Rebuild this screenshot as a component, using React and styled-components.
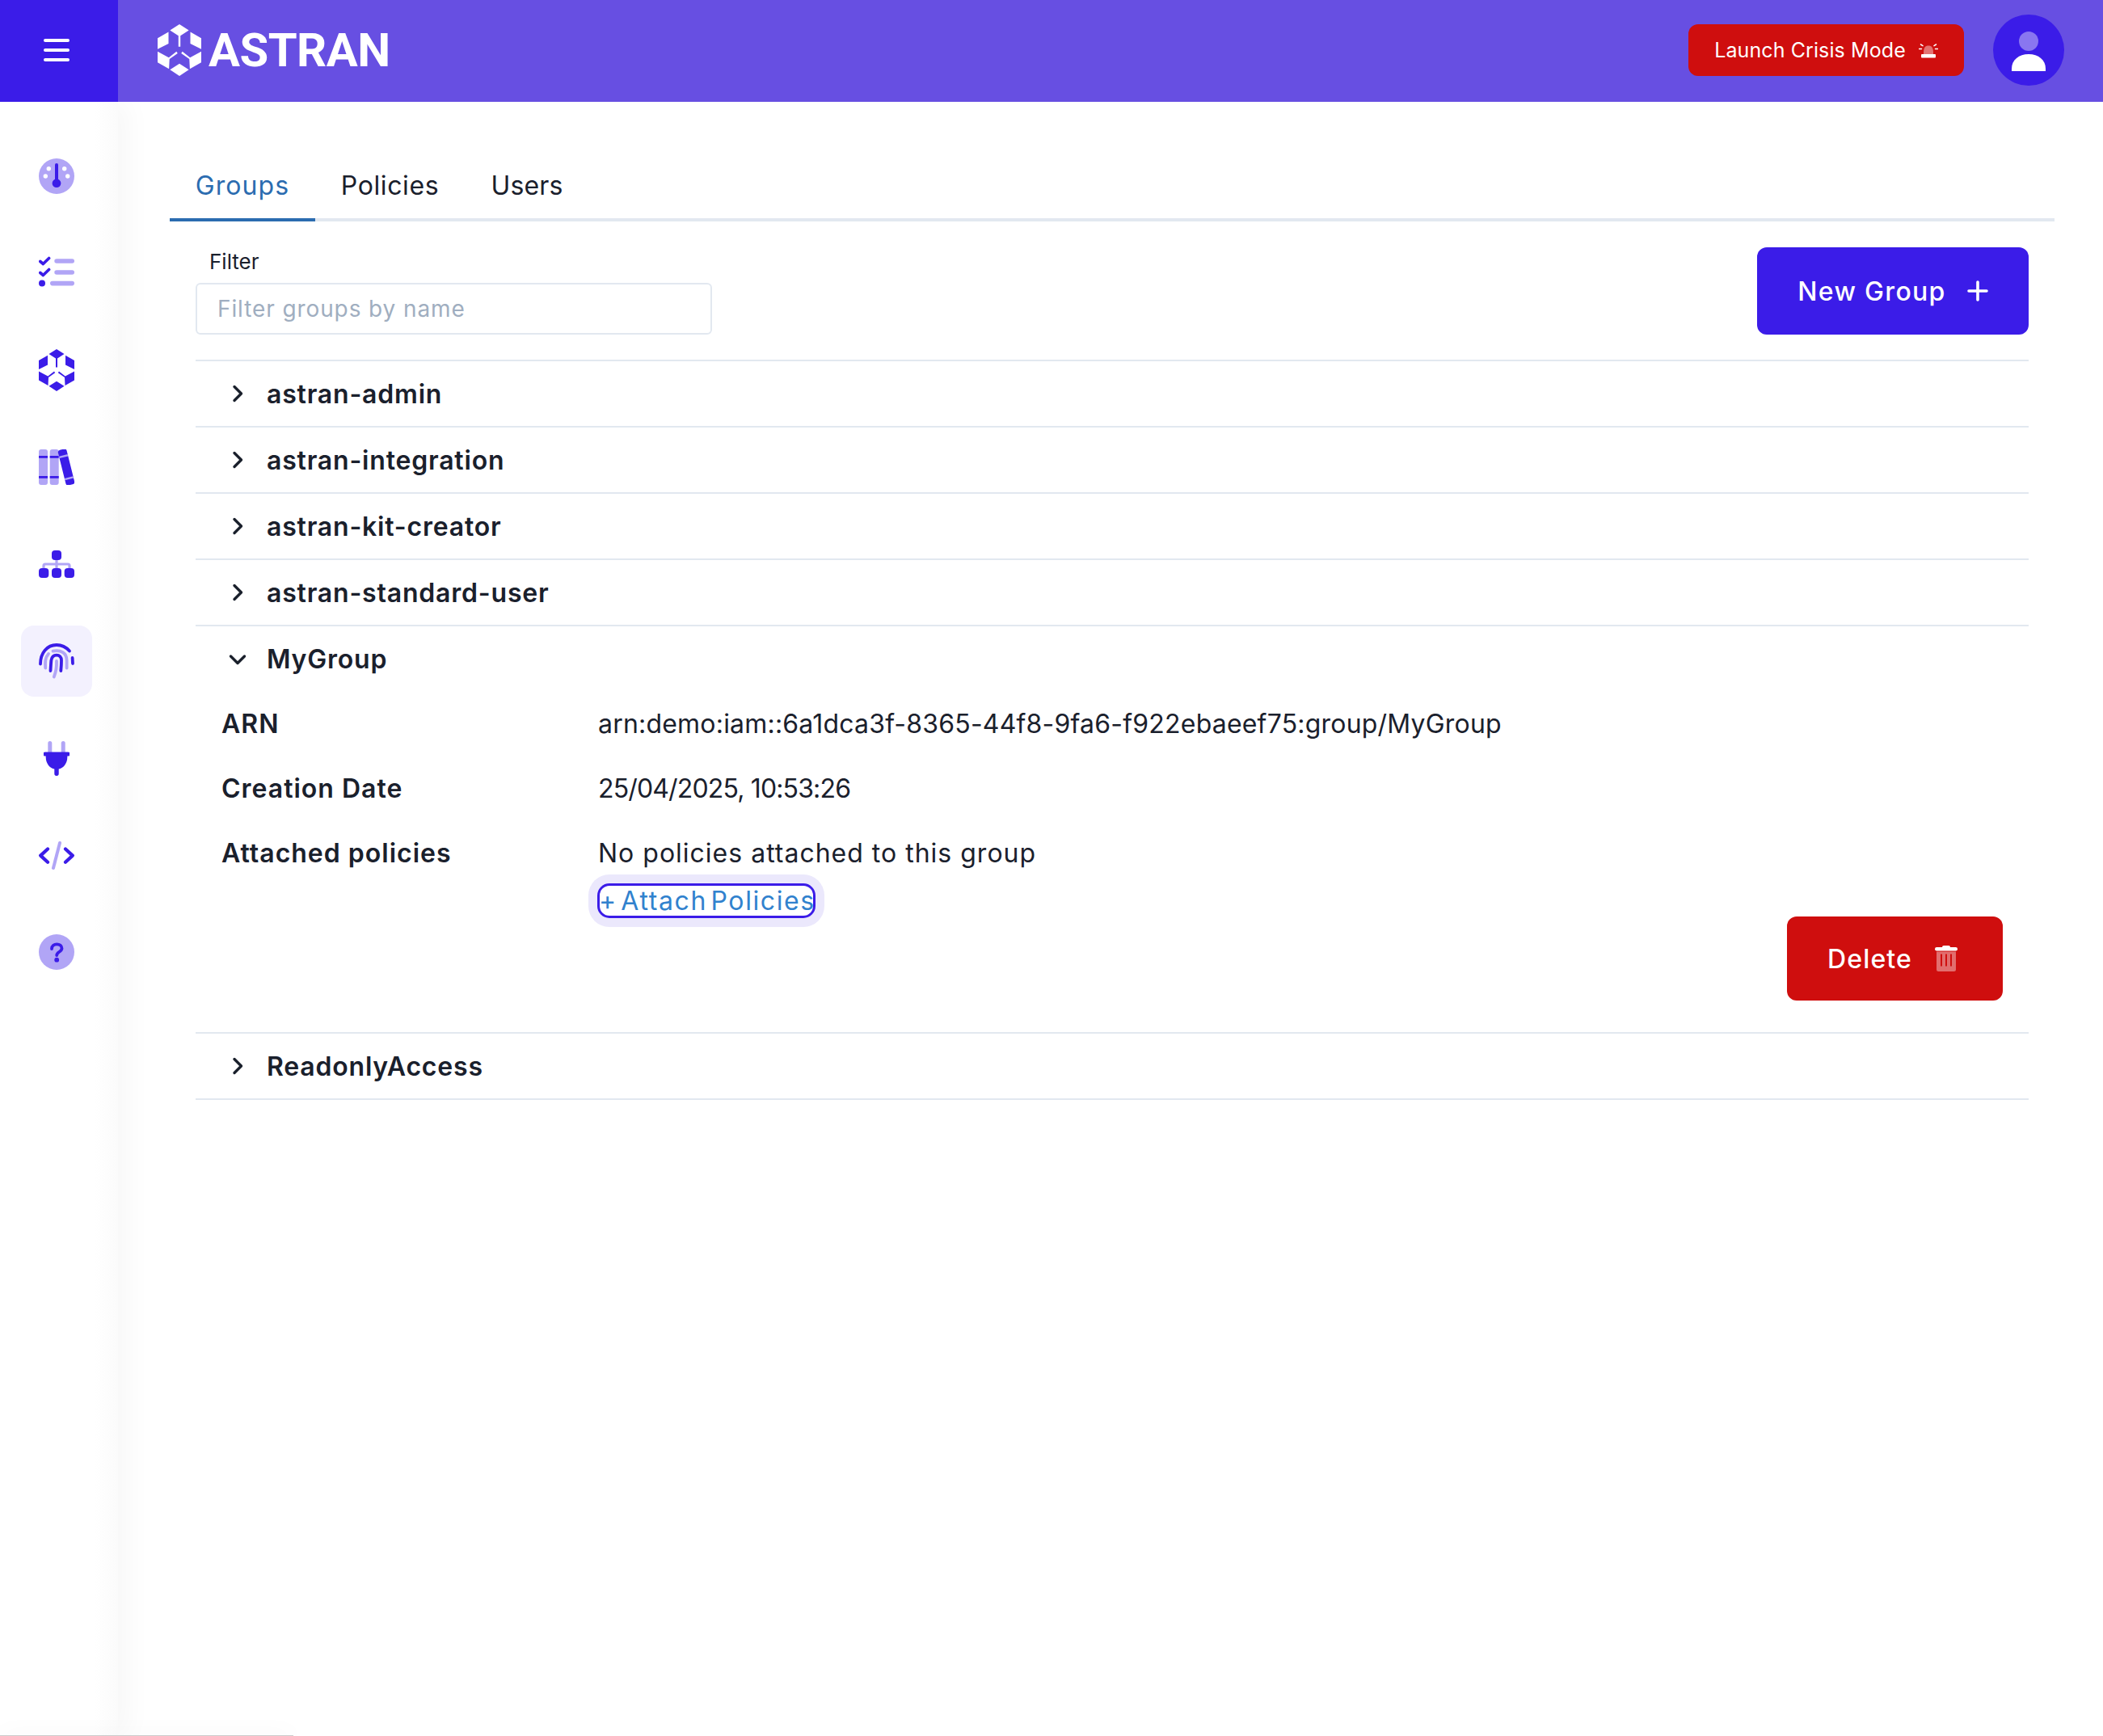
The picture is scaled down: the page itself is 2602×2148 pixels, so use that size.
import styled, { createGlobalStyle } from "styled-components";

const primary = "#3b1ce8";
const light = "#b1a5f6";
const red = "#cf0e0e";
const ink = "#1a202c";
const line = "#e2e8f0";

const GlobalStyle = createGlobalStyle`
  html, body {
    margin: 0;
    padding: 0;
    background: #fff;
    width: 2602px;
    height: 2148px;
    overflow: hidden;
    font-family: Inter, "Noto Sans", sans-serif;
    color: ${ink};
  }
  * { box-sizing: border-box; }
`;

const HexMark = ({ width = 44, height = 52 }) => (
  <svg width={width} height={height} viewBox="0 0 44 52" fill="currentColor">
    <path d="M22 0l9.5 6L23 11.6V22.6H21V11.6L12.5 6z" />
    <path d="M22 39.7l9.5 6.1L22 52l-9.5-6.2z" />
    <path d="M0 14L11 7.7V19.5L0 25z" />
    <path d="M44 14L33 7.7V19.5L44 25z" />
    <path d="M0 27.5L11.3 33.5L19 27.5L20.2 29.2L12 35L11.5 45L0 38.5z" />
    <path d="M44 27.5L32.7 33.5L25 27.5L23.8 29.2L32 35L32.5 45L44 38.5z" />
  </svg>
);

const DashIcon = () => (
  <svg width="44" height="44" viewBox="0 0 44 44">
    <circle cx="22" cy="22" r="22" fill={light} />
    <g fill="#fff">
      <circle cx="12.3" cy="12.7" r="2.7" />
      <circle cx="31.7" cy="12.7" r="2.7" />
      <circle cx="8.3" cy="22" r="2.7" />
      <circle cx="35.7" cy="22" r="2.7" />
    </g>
    <rect x="20" y="6" width="4" height="24" rx="2" fill={primary} />
    <circle cx="22" cy="30.7" r="5.4" fill={primary} />
  </svg>
);

const TasksIcon = () => (
  <svg width="44" height="44" viewBox="0 -1.5 44 44">
    <g fill={light}>
      <rect x="19.3" y="2.7" width="24.7" height="5.6" rx="2.8" />
      <rect x="19.3" y="16.7" width="24.7" height="5.6" rx="2.8" />
      <rect x="14" y="30.3" width="30" height="5.6" rx="2.8" />
    </g>
    <g fill="none" stroke={primary} strokeWidth="3.6" strokeLinecap="round" strokeLinejoin="round">
      <path d="M1.8 6L5.4 9L12.6 2" />
      <path d="M1.8 20L5.4 23L12.6 16" />
    </g>
    <circle cx="4" cy="33" r="4" fill={primary} />
  </svg>
);

const BooksIcon = () => (
  <svg width="44" height="44" viewBox="0 0 44 44">
    <rect x="0" width="11" height="44" rx="3" fill={light} />
    <rect x="13.7" width="11" height="44" rx="3" fill={light} />
    <g fill={primary}>
      <rect x="0" y="8" width="11" height="2.8" />
      <rect x="13.7" y="8" width="11" height="2.8" />
      <rect x="0" y="33" width="11" height="2.8" />
      <rect x="13.7" y="33" width="11" height="2.8" />
    </g>
    <g transform="rotate(-14 34 22)">
      <rect x="28.5" y="-0.5" width="11" height="45" rx="3" fill={primary} />
      <rect x="28.5" y="7" width="11" height="2.4" fill={light} />
      <rect x="28.5" y="35" width="11" height="2.4" fill={light} />
    </g>
  </svg>
);

const OrgIcon = () => (
  <svg width="44" height="34" viewBox="0 0 44 34">
    <path d="M6 24V19a2 2 0 0 1 2-2H36a2 2 0 0 1 2 2V24M22 11V24" fill="none" stroke={light} strokeWidth="3.2" />
    <g fill={primary}>
      <rect x="16" width="12" height="12" rx="4" />
      <rect y="22" width="12.3" height="12" rx="4" />
      <rect x="16" y="22" width="12" height="12" rx="4" />
      <rect x="31.7" y="22" width="12.3" height="12" rx="4" />
    </g>
  </svg>
);

const FingerIcon = () => (
  <svg width="44" height="44" viewBox="0 0 44 44" fill="none" strokeWidth="3.8" strokeLinecap="round">
    <g stroke={primary}>
      <path d="M2 25.5C2 12 10 2 22 2C29 2 34 5 38 9.5" />
      <path d="M41.6 18L42 25" />
      <path d="M14.5 34C14.8 29 15 25 15.4 21C16 17 18.6 14.6 22 14.6C25.6 14.6 28 17 28 21C28 25 27.8 29 27.3 34" />
    </g>
    <g stroke={light}>
      <path d="M8.2 30.5C7.8 24 7.5 18 12 13" />
      <path d="M17.5 9.6C27 7.5 34.6 12 34.6 21V30.5" />
      <path d="M22 22C22.4 30 21 36 18.8 41.5" />
    </g>
  </svg>
);

const PlugIcon = () => (
  <svg width="32" height="43" viewBox="0 0 32 43">
    <rect x="5.3" width="5" height="16" rx="2.5" fill={light} />
    <rect x="21.7" width="5" height="16" rx="2.5" fill={light} />
    <path
      d="M2 13.4H30a2 2 0 0 1 0 5.2H29.3V20C29.3 28 24 33.6 18.7 34.6V40.3a2.7 2.7 0 0 1-5.4 0V34.6C8 33.6 2.7 28 2.7 20V18.6H2a2 2 0 0 1 0-5.2z"
      fill={primary}
    />
  </svg>
);

const CodeIcon = () => (
  <svg width="44" height="35" viewBox="0 0 44 35" fill="none" strokeLinecap="round" strokeLinejoin="round">
    <path d="M11 9.5L2.2 17.6L11 25.8M33 9.5L41.8 17.6L33 25.8" stroke={primary} strokeWidth="4.2" />
    <path d="M26 2L18 33" stroke={light} strokeWidth="4" />
  </svg>
);

const HelpIcon = () => (
  <svg width="44" height="44" viewBox="0 0 44 44">
    <circle cx="22" cy="22" r="22" fill={light} />
    <path d="M16 18C16 10.5 28.5 10.5 28.5 17.5C28.5 22 22.2 21.5 22.2 26" fill="none" stroke={primary} strokeWidth="3.8" strokeLinecap="round" />
    <circle cx="22.2" cy="31.7" r="2.9" fill={primary} />
  </svg>
);

const SirenIcon = () => (
  <svg width="24" height="20" viewBox="0 0 24 20">
    <path d="M6 13C6 7 8 4.5 12 4.5C16 4.5 18 7 18 13V15H6z" fill="#fff" fillOpacity="0.42" />
    <rect x="3" y="15" width="18" height="4.4" rx="1" fill="#fff" />
    <path d="M2.5 3L5 4.6M0.5 8.5H3.5M21.5 3L19 4.6M23.5 8.5H20.5" stroke="#fff" strokeWidth="1.5" strokeLinecap="round" />
  </svg>
);

const TrashIcon = () => (
  <svg width="28" height="32" viewBox="0 0 28 32">
    <path d="M2 7.5H26V29.5a2.5 2.5 0 0 1-2.5 2.5H4.5A2.5 2.5 0 0 1 2 29.5z" fill="#fff" fillOpacity="0.4" />
    <rect x="0" y="2" width="28" height="4.4" rx="2.2" fill="#fff" />
    <rect x="9" y="0" width="10" height="4" rx="2" fill="#fff" />
    <g fill={red}>
      <rect x="7" y="10.5" width="2" height="15" />
      <rect x="13" y="10.5" width="2" height="15" />
      <rect x="19" y="10.5" width="2" height="15" />
    </g>
  </svg>
);

const PlusIcon = () => (
  <svg width="26" height="26" viewBox="0 0 26 26">
    <path d="M13 2V24M2 13H24" stroke="#fff" strokeWidth="3.6" strokeLinecap="round" />
  </svg>
);

const Chevron = ({ open }) => (
  <svg width="32" height="32" viewBox="0 0 32 32" fill="none" stroke={ink} strokeWidth="3.4" strokeLinecap="round" strokeLinejoin="round">
    <path d={open ? "M7.5 12L16 20.5L24.5 12" : "M12 7.5L20.5 16L12 24.5"} />
  </svg>
);

const navItems = [
  { icon: <DashIcon /> },
  { icon: <TasksIcon /> },
  { icon: <HexMark /> },
  { icon: <BooksIcon /> },
  { icon: <OrgIcon /> },
  { icon: <FingerIcon />, active: true },
  { icon: <PlugIcon /> },
  { icon: <CodeIcon /> },
  { icon: <HelpIcon /> },
];

const groupsBefore = ["astran-admin", "astran-integration", "astran-kit-creator", "astran-standard-user"];

const App = () => {
  return (
    <Page>
      <GlobalStyle />
      <Header>
        <MenuBlock>
          <MenuBars>
            <span />
            <span />
            <span />
          </MenuBars>
        </MenuBlock>
        <Brand>
          <HexMark width={54} height={64} />
          <BrandName>ASTRAN</BrandName>
        </Brand>
        <HeaderRight>
          <CrisisButton>
            Launch Crisis Mode
            <SirenIcon />
          </CrisisButton>
          <Avatar>
            <svg width="44" height="50" viewBox="0 0 44 50">
              <circle cx="22" cy="12" r="12" fill="#8976f0" />
              <path d="M1 49V46C1 35 10 28 22 28C34 28 43 35 43 46V49z" fill="#fff" />
            </svg>
          </Avatar>
        </HeaderRight>
      </Header>
      <Body>
        <Sidebar>
          {navItems.map((item, i) => (
            <NavTile key={i} $active={item.active}>
              {item.icon}
            </NavTile>
          ))}
        </Sidebar>
        <Main>
          <TabList>
            <Tab $active $width={180} $track={1.1}>Groups</Tab>
            <Tab $width={185} $track={0.6}>Policies</Tab>
            <Tab $width={154} $track={0.1}>Users</Tab>
          </TabList>
          <TabPanel>
            <Toolbar>
              <div>
                <FilterLabel>Filter</FilterLabel>
                <FilterInput placeholder="Filter groups by name" />
              </div>
              <PrimaryButton>
                New Group
                <PlusIcon />
              </PrimaryButton>
            </Toolbar>
            {groupsBefore.map((name) => (
              <GroupRow key={name}>
                <Chevron />
                <GroupName>{name}</GroupName>
              </GroupRow>
            ))}
            <Expanded>
              <GroupRow $open>
                <Chevron open />
                <GroupName>MyGroup</GroupName>
              </GroupRow>
              <DetailRow>
                <DetailLabel>ARN</DetailLabel>
                <DetailValue $track={0.2}>arn:demo:iam::6a1dca3f-8365-44f8-9fa6-f922ebaeef75:group/MyGroup</DetailValue>
              </DetailRow>
              <DetailRow>
                <DetailLabel>Creation Date</DetailLabel>
                <DetailValue $track={-0.85}>25/04/2025, 10:53:26</DetailValue>
              </DetailRow>
              <DetailRow $tall>
                <DetailLabel>Attached policies</DetailLabel>
                <div>
                  <DetailValue $track={1}>No policies attached to this group</DetailValue>
                  <AttachLink>+ Attach Policies</AttachLink>
                </div>
              </DetailRow>
              <DetailFooter>
                <DangerButton>
                  Delete
                  <TrashIcon />
                </DangerButton>
              </DetailFooter>
            </Expanded>
            <GroupRow>
              <Chevron />
              <GroupName>ReadonlyAccess</GroupName>
            </GroupRow>
          </TabPanel>
        </Main>
      </Body>
      <BottomShadow />
    </Page>
  );
};

const Page = styled.div`
  position: relative;
  width: 2602px;
  height: 2148px;
  overflow: hidden;
  display: flex;
  flex-direction: column;
`;

const Header = styled.header`
  flex: 0 0 126px;
  display: flex;
  align-items: center;
  background: #674fe2;
  position: relative;
  z-index: 2;
`;

const MenuBlock = styled.div`
  width: 146px;
  height: 100%;
  padding: 0 6px 2px 0;
  background: ${primary};
  display: flex;
  align-items: center;
  justify-content: center;
`;

const MenuBars = styled.div`
  width: 32px;
  display: flex;
  flex-direction: column;
  gap: 8px;

  span {
    height: 4px;
    border-radius: 2px;
    background: #fff;
  }
`;

const Brand = styled.div`
  margin: 0 0 2px 49px;
  display: flex;
  align-items: center;
  gap: 9px;
  color: #fff;
`;

const BrandName = styled.span`
  font-family: Roboto, sans-serif;
  font-weight: 700;
  font-size: 58px;
  line-height: 64px;
  letter-spacing: -0.5px;
`;

const HeaderRight = styled.div`
  margin-left: auto;
  padding: 0 48px 2px 0;
  display: flex;
  align-items: center;
  gap: 36px;
`;

const CrisisButton = styled.button`
  width: 341px;
  height: 64px;
  border: 0;
  border-radius: 12px;
  background: ${red};
  color: #fff;
  font-family: Inter, sans-serif;
  font-size: 25px;
  letter-spacing: 0.1px;
  display: flex;
  align-items: center;
  justify-content: center;
  gap: 16px;
`;

const Avatar = styled.div`
  width: 88px;
  height: 88px;
  border-radius: 50%;
  background: ${primary};
  display: flex;
  align-items: center;
  justify-content: center;
  padding-top: 4px;
`;

const Body = styled.div`
  flex: 1;
  display: flex;
  min-height: 0;
`;

const Sidebar = styled.nav`
  flex: 0 0 146px;
  padding: 48px 6px 0 0;
  display: flex;
  flex-direction: column;
  align-items: center;
  gap: 32px;
  background: linear-gradient(to right, #fff 80%, #fbfbfb);
  box-shadow: 12px 0 32px rgba(0, 0, 0, 0.035);
`;

const NavTile = styled.div`
  width: 88px;
  height: 88px;
  border-radius: 16px;
  display: flex;
  align-items: center;
  justify-content: center;
  background: ${(p) => (p.$active ? "#f3f1fe" : "transparent")};
  color: ${primary};
`;

const Main = styled.main`
  flex: 1;
  padding: 70px 60px 0 64px;
`;

const TabList = styled.div`
  display: flex;
  border-bottom: 4px solid ${line};
`;

const Tab = styled.div`
  width: ${(p) => p.$width}px;
  height: 78px;
  margin-bottom: -4px;
  text-align: center;
  line-height: 68px;
  font-size: 32px;
  letter-spacing: ${(p) => p.$track}px;
  color: ${(p) => (p.$active ? "#2b6cb0" : ink)};
  border-bottom: 4px solid ${(p) => (p.$active ? "#2b6cb0" : "transparent")};
`;

const TabPanel = styled.div`
  padding: 32px 32px 0 32px;
`;

const Toolbar = styled.div`
  height: 141px;
  display: flex;
  justify-content: space-between;
  align-items: flex-start;
  border-bottom: 2px solid ${line};
`;

const FilterLabel = styled.div`
  height: 36px;
  margin-bottom: 8px;
  padding-left: 17px;
  font-size: 26px;
  line-height: 36px;
`;

const FilterInput = styled.input`
  display: block;
  width: 639px;
  height: 64px;
  padding: 0 25px;
  border: 2px solid ${line};
  border-radius: 6px;
  background: #fff;
  font-family: Inter, sans-serif;
  font-size: 28px;
  letter-spacing: 0.9px;

  &::placeholder {
    color: #a0aec0;
    opacity: 1;
  }
`;

const PrimaryButton = styled.button`
  width: 336px;
  height: 108px;
  border: 0;
  border-radius: 12px;
  background: ${primary};
  color: #fff;
  font-family: Inter, sans-serif;
  font-size: 32px;
  font-weight: 500;
  letter-spacing: 1.3px;
  display: flex;
  align-items: center;
  justify-content: center;
  gap: 26px;
`;

const GroupRow = styled.div`
  height: ${(p) => (p.$open ? "81px" : "82px")};
  padding-left: 36px;
  display: flex;
  align-items: center;
  gap: 20px;
  border-bottom: ${(p) => (p.$open ? "none" : `2px solid ${line}`)};
`;

const GroupName = styled.span`
  font-size: 32px;
  font-weight: 600;
  letter-spacing: 0.8px;
`;

const Expanded = styled.section`
  border-bottom: 2px solid ${line};
`;

const DetailRow = styled.div`
  display: flex;
  align-items: flex-start;
  padding-top: 16px;
  padding-left: 32px;
  height: ${(p) => (p.$tall ? "118px" : "80px")};
`;

const DetailLabel = styled.div`
  width: 466px;
  font-size: 32px;
  line-height: 48px;
  font-weight: 600;
  letter-spacing: 1px;
`;

const DetailValue = styled.div`
  font-size: 32px;
  line-height: 48px;
  letter-spacing: ${(p) => p.$track}px;
`;

const AttachLink = styled.a`
  display: block;
  width: 264px;
  height: 37px;
  margin: 16px 0 0 2px;
  border-radius: 12px;
  box-shadow: 0 0 0 3px ${primary}, 0 0 0 14px #ebe8fc;
  background: #fff;
  font-size: 32px;
  line-height: 37px;
  text-indent: -1px;
  color: #3182ce;
  white-space: nowrap;
  letter-spacing: 1.6px;
  word-spacing: -6px;
`;

const DetailFooter = styled.div`
  display: flex;
  justify-content: flex-end;
  padding: 0 32px 39px 0;
`;

const DangerButton = styled.button`
  width: 267px;
  height: 104px;
  padding: 0 6px 0 0;
  border: 0;
  border-radius: 12px;
  background: ${red};
  color: #fff;
  font-family: Inter, sans-serif;
  font-size: 32px;
  font-weight: 500;
  letter-spacing: 1.15px;
  display: flex;
  align-items: center;
  justify-content: center;
  gap: 28px;
`;

const BottomShadow = styled.div`
  position: absolute;
  left: 0;
  bottom: -2px;
  width: 363px;
  height: 3px;
  background: #ccc;
  box-shadow: 0 0 28px rgba(0, 0, 0, 0.12);
`;

export default App;
